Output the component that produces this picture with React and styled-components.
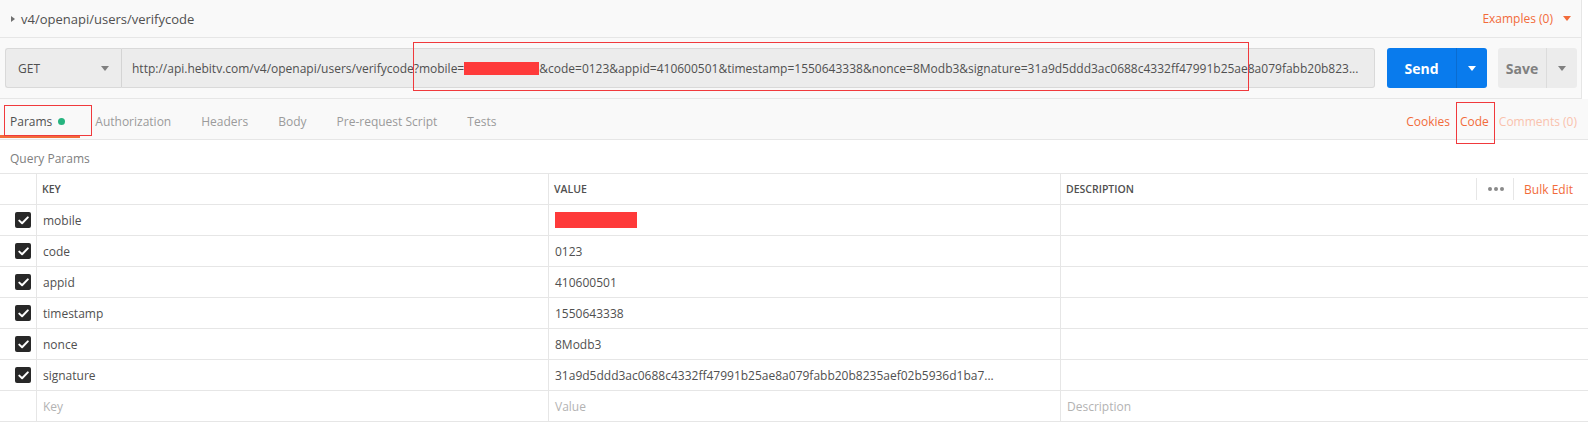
import React from "react";
import styled, { createGlobalStyle } from "styled-components";

const Global = createGlobalStyle`
  html, body { margin: 0; padding: 0; background: #fff; }
  body { font-family: "Open Sans", "Noto Sans", sans-serif; color: #505050; }
  * { box-sizing: border-box; }
`;

const Page = styled.div`
  position: relative;
  width: 1588px;
  height: 423px;
  overflow: hidden;
  background: #fff;
`;

const TopArea = styled.div`
  width: 1582px;
  background: #f9f9f9;
  border-right: 1px solid #e6e6e6;
`;

const TitleBar = styled.div`
  height: 38px;
  display: flex;
  align-items: center;
  padding: 0 10px 0 11px;
  border-bottom: 1px solid #e6e6e6;
`;

const Caret = styled.span`
  width: 0;
  height: 0;
  border-style: solid;
  border-width: ${(p) => (p.$dir === "right" ? "3.5px 0 3.5px 4px" : "5px 4px 0 4px")};
  border-color: ${(p) =>
    p.$dir === "right"
      ? `transparent transparent transparent ${p.$color}`
      : `${p.$color} transparent transparent transparent`};
  display: inline-block;
  flex: none;
`;

const Title = styled.span`
  font-size: 13px;
  color: #505050;
  margin-left: 6px;
  flex: 1;
`;

const Examples = styled.span`
  font-size: 12px;
  color: #f26b3a;
  display: flex;
  align-items: center;
  gap: 10px;
`;

const UrlRow = styled.div`
  display: flex;
  align-items: center;
  height: 61px;
  padding: 0 0 0 5px;
  border-bottom: 1px solid #e6e6e6;
`;

const MethodSelect = styled.div`
  width: 117px;
  height: 40px;
  background: #ececec;
  border: 1px solid #d9d9d9;
  border-right: 1px solid #d4d4d4;
  border-radius: 3px 0 0 3px;
  display: flex;
  align-items: center;
  justify-content: space-between;
  padding: 0 12px 0 12px;
  font-size: 12px;
  color: #505050;
`;

const UrlInput = styled.div`
  width: 1253px;
  height: 40px;
  background: #ececec;
  border: 1px solid #d9d9d9;
  border-left: none;
  border-radius: 0 3px 3px 0;
  display: flex;
  align-items: center;
  padding: 0 10px;
  font-size: 12px;
  color: #505050;
  white-space: nowrap;
  overflow: hidden;
`;

const Redact = styled.span`
  display: inline-block;
  width: ${(p) => p.$w}px;
  height: ${(p) => p.$h}px;
  background: #fe3a3a;
  vertical-align: middle;
`;

const SplitButton = styled.div`
  display: flex;
  height: 40px;
  margin-left: ${(p) => p.$ml}px;
  border-radius: 3px;
  overflow: hidden;
  background: ${(p) => (p.$primary ? "#097bed" : "#ececec")};
`;

const SplitMain = styled.div`
  width: ${(p) => p.$w}px;
  display: flex;
  align-items: center;
  justify-content: center;
  font-size: 14px;
  font-weight: 700;
  color: ${(p) => (p.$primary ? "#fff" : "#808080")};
  border-right: 1px solid ${(p) => (p.$primary ? "#0a6cd0" : "#dcdcdc")};
`;

const SplitArrow = styled.div`
  width: 30px;
  display: flex;
  align-items: center;
  justify-content: center;
`;

const TabsRow = styled.div`
  height: 41px;
  display: flex;
  align-items: stretch;
  background: #f9f9f9;
  border-bottom: 1px solid #e6e6e6;
  padding: 5px 6px 0 0;
`;

const Tab = styled.div`
  position: relative;
  display: flex;
  align-items: center;
  padding: 0 15px;
  font-size: 12px;
  color: ${(p) => (p.$active ? "#505050" : "#9b9b9b")};
  &:first-child { padding-left: 10px; }
  ${(p) =>
    p.$active &&
    `&::after {
      content: "";
      position: absolute;
      left: 0; right: 0; bottom: 1px;
      height: 3px;
      background: #f26b3a;
    }`}
`;

const Dot = styled.span`
  width: 7px;
  height: 7px;
  border-radius: 50%;
  background: #26b47f;
  margin-left: 6px;
`;

const Spacer = styled.div`
  flex: 1;
`;

const RightLink = styled.div`
  display: flex;
  align-items: center;
  padding: 0 5px;
  font-size: 12px;
  color: ${(p) => (p.$faded ? "#f9c2ad" : "#f26b3a")};
`;

const SectionLabel = styled.div`
  height: 33px;
  display: flex;
  align-items: center;
  padding: 4px 0 0 10px;
  font-size: 12px;
  color: #808080;
`;

const Table = styled.div`
  border-top: 1px solid #e6e6e6;
`;

const Row = styled.div`
  display: grid;
  grid-template-columns: 36px 512px 512px 1fr;
  height: 31px;
  border-bottom: 1px solid #e6e6e6;
`;

const Cell = styled.div`
  display: flex;
  align-items: center;
  padding: 0 ${(p) => (p.$head ? 5 : 6)}px;
  font-size: ${(p) => (p.$head ? "10.5px" : "12px")};
  font-weight: ${(p) => (p.$head ? 600 : 400)};
  color: ${(p) => (p.$placeholder ? "#b3b3b3" : "#505050")};
  border-left: ${(p) => (p.$first ? "none" : "1px solid #e6e6e6")};
  white-space: nowrap;
  overflow: hidden;
`;

const CheckCell = styled.div`
  display: flex;
  align-items: center;
  justify-content: flex-start;
  padding-left: 15px;
`;

const CheckBox = styled.span`
  width: 16px;
  height: 16px;
  border-radius: 2px;
  background: #282828;
  display: flex;
  align-items: center;
  justify-content: center;
`;

const HeadTools = styled.div`
  margin-left: auto;
  display: flex;
  align-items: center;
  height: 100%;
`;

const ToolSep = styled.span`
  width: 1px;
  height: 22px;
  background: #e6e6e6;
`;

const Dots = styled.span`
  display: flex;
  gap: 2px;
  padding: 0 9px 0 11px;
  & > i {
    width: 4px;
    height: 4px;
    border-radius: 50%;
    background: #8a8a8a;
  }
`;

const BulkEdit = styled.span`
  font-size: 12px;
  font-weight: 400;
  color: #f26b3a;
  padding: 0 10px 0 10px;
`;

const Annot = styled.div`
  position: absolute;
  border: 1px solid #f0393c;
  pointer-events: none;
`;

const Check = () => (
  <CheckBox>
    <svg width="11" height="9" viewBox="0 0 11 9">
      <path d="M1.3 4.6 L4.1 7.3 L9.8 1.4" stroke="#fff" strokeWidth="2" fill="none" strokeLinecap="round" strokeLinejoin="round" />
    </svg>
  </CheckBox>
);

const rows = [
  ["mobile", null],
  ["code", "0123"],
  ["appid", "410600501"],
  ["timestamp", "1550643338"],
  ["nonce", "8Modb3"],
  ["signature", "31a9d5ddd3ac0688c4332ff47991b25ae8a079fabb20b8235aef02b5936d1ba7..."],
];

export default function App() {
  return (
    <Page>
      <Global />
      <TopArea>
        <TitleBar>
          <Caret $dir="right" $color="#707070" />
          <Title>v4/openapi/users/verifycode</Title>
          <Examples>
            Examples (0)
            <Caret $dir="down" $color="#f26b3a" />
          </Examples>
        </TitleBar>
        <UrlRow>
          <MethodSelect>
            GET
            <Caret $dir="down" $color="#808080" />
          </MethodSelect>
          <UrlInput>
            http://api.hebitv.com/v4/openapi/users/verifycode?mobile=
            <Redact $w={75} $h={13} />
            &amp;code=0123&amp;appid=410600501&amp;timestamp=1550643338&amp;nonce=8Modb3&amp;signature=31a9d5ddd3ac0688c4332ff47991b25ae8a079fabb20b823...
          </UrlInput>
          <SplitButton $primary $ml={12}>
            <SplitMain $primary $w={70}>Send</SplitMain>
            <SplitArrow>
              <Caret $dir="down" $color="#ffffff" />
            </SplitArrow>
          </SplitButton>
          <SplitButton $ml={11}>
            <SplitMain $w={49}>Save</SplitMain>
            <SplitArrow>
              <Caret $dir="down" $color="#808080" />
            </SplitArrow>
          </SplitButton>
        </UrlRow>
      </TopArea>
      <TabsRow>
        <Tab $active>
          Params
          <Dot />
        </Tab>
        <Tab>Authorization</Tab>
        <Tab>Headers</Tab>
        <Tab>Body</Tab>
        <Tab>Pre-request Script</Tab>
        <Tab>Tests</Tab>
        <Spacer />
        <RightLink>Cookies</RightLink>
        <RightLink>Code</RightLink>
        <RightLink $faded>Comments (0)</RightLink>
      </TabsRow>
      <SectionLabel>Query Params</SectionLabel>
      <Table>
        <Row>
          <Cell $first />
          <Cell $head>KEY</Cell>
          <Cell $head>VALUE</Cell>
          <Cell $head>
            DESCRIPTION
            <HeadTools>
              <ToolSep />
              <Dots>
                <i />
                <i />
                <i />
              </Dots>
              <ToolSep />
              <BulkEdit>Bulk Edit</BulkEdit>
            </HeadTools>
          </Cell>
        </Row>
        {rows.map(([k, v]) => (
          <Row key={k}>
            <CheckCell>
              <Check />
            </CheckCell>
            <Cell>{k}</Cell>
            <Cell>{v === null ? <Redact $w={82} $h={16} /> : v}</Cell>
            <Cell />
          </Row>
        ))}
        <Row>
          <Cell $first />
          <Cell $placeholder>Key</Cell>
          <Cell $placeholder>Value</Cell>
          <Cell $placeholder>Description</Cell>
        </Row>
      </Table>
      <Annot style={{ left: 413, top: 42, width: 836, height: 49 }} />
      <Annot style={{ left: 4, top: 105, width: 88, height: 31 }} />
      <Annot style={{ left: 1456, top: 102, width: 39, height: 42 }} />
    </Page>
  );
}
